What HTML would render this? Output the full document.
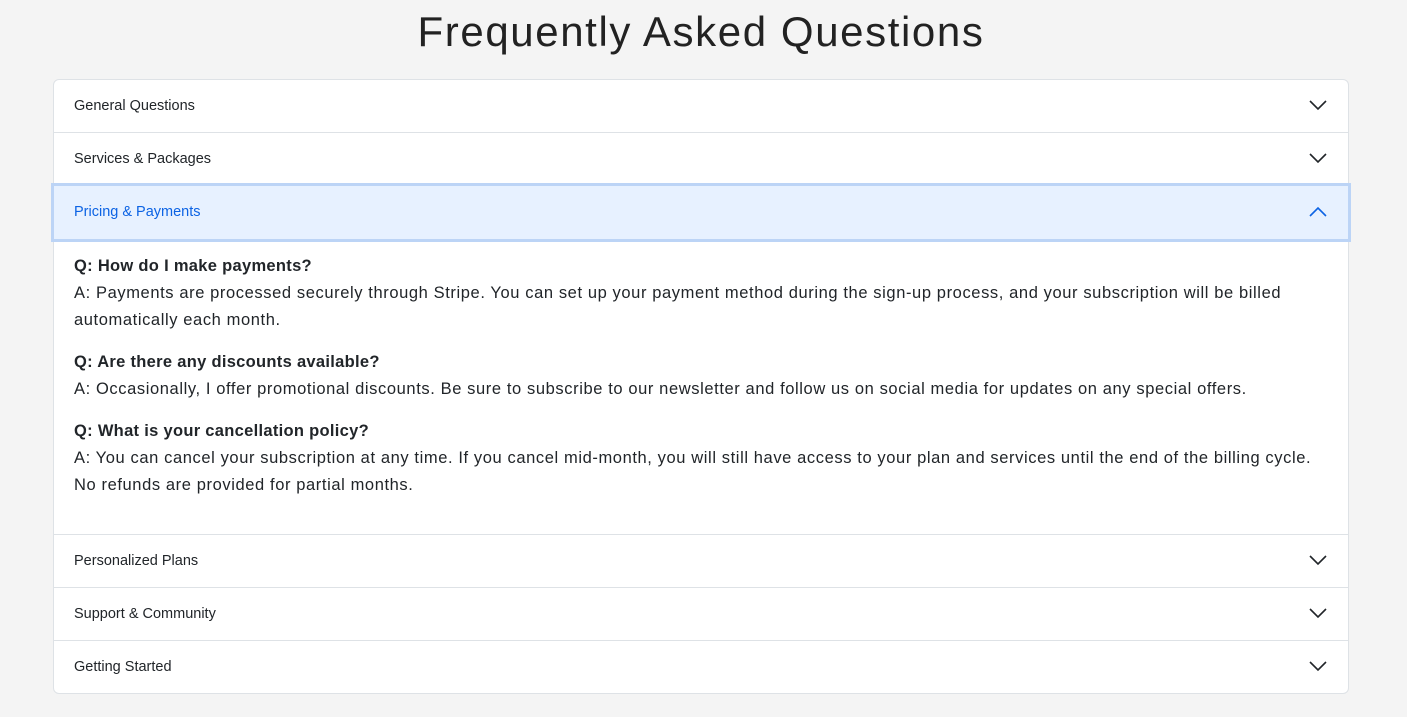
<!DOCTYPE html>
<html><head><meta charset="utf-8"><style>
body{margin:0;background:#f4f4f4;font-family:"Liberation Sans",sans-serif;color:#212529;width:1407px;height:717px;overflow:hidden}
h1{margin:0;position:absolute;top:6px;left:0;width:1402px;text-align:center;font-weight:400;font-size:42px;line-height:52px;color:#222;letter-spacing:1.6px}
.acc{position:absolute;left:53px;top:79px;width:1294px;border:1px solid #dee2e6;border-radius:6px;background:#fff}
.row{height:52px;border-bottom:1px solid #dee2e6;position:relative;font-size:14.5px;line-height:52px;padding-left:20px}
.row svg{position:absolute;right:21px;top:19px}
.act{background:#e7f1ff;color:#0c63e4;box-shadow:0 0 0 3px #bcd4f6;border-bottom:none;height:53px;line-height:53px;z-index:2}
.body{padding:14px 20px 35px;font-size:16.5px;line-height:27px;letter-spacing:0.6px;border-bottom:1px solid #dee2e6}
.body p{margin:0 0 15px}
.body b{letter-spacing:0.3px}
.last{border-bottom:none}
</style></head><body>
<h1>Frequently Asked Questions</h1>
<div class="acc">
<div class="row">General Questions<svg width="18" height="12" viewBox="0 0 18 12"><path d="M1 2l8 8 8-8" fill="none" stroke="#212529" stroke-width="1.6"/></svg></div>
<div class="row">Services &amp; Packages<svg width="18" height="12" viewBox="0 0 18 12"><path d="M1 2l8 8 8-8" fill="none" stroke="#212529" stroke-width="1.6"/></svg></div>
<div class="row act">Pricing &amp; Payments<svg width="18" height="12" viewBox="0 0 18 12" style="top:20px"><path d="M1 10l8-8 8 8" fill="none" stroke="#0c63e4" stroke-width="1.6"/></svg></div>
<div class="body">
<p><b>Q: How do I make payments?</b><br>A: Payments are processed securely through Stripe. You can set up your payment method during the sign-up process, and your subscription will be billed automatically each month.</p>
<p><b>Q: Are there any discounts available?</b><br>A: Occasionally, I offer promotional discounts. Be sure to subscribe to our newsletter and follow us on social media for updates on any special offers.</p>
<p style="margin:0"><b>Q: What is your cancellation policy?</b><br>A: You can cancel your subscription at any time. If you cancel mid-month, you will still have access to your plan and services until the end of the billing cycle. No refunds are provided for partial months.</p>
</div>
<div class="row">Personalized Plans<svg width="18" height="12" viewBox="0 0 18 12"><path d="M1 2l8 8 8-8" fill="none" stroke="#212529" stroke-width="1.6"/></svg></div>
<div class="row">Support &amp; Community<svg width="18" height="12" viewBox="0 0 18 12"><path d="M1 2l8 8 8-8" fill="none" stroke="#212529" stroke-width="1.6"/></svg></div>
<div class="row last">Getting Started<svg width="18" height="12" viewBox="0 0 18 12"><path d="M1 2l8 8 8-8" fill="none" stroke="#212529" stroke-width="1.6"/></svg></div>
</div>
</body></html>
